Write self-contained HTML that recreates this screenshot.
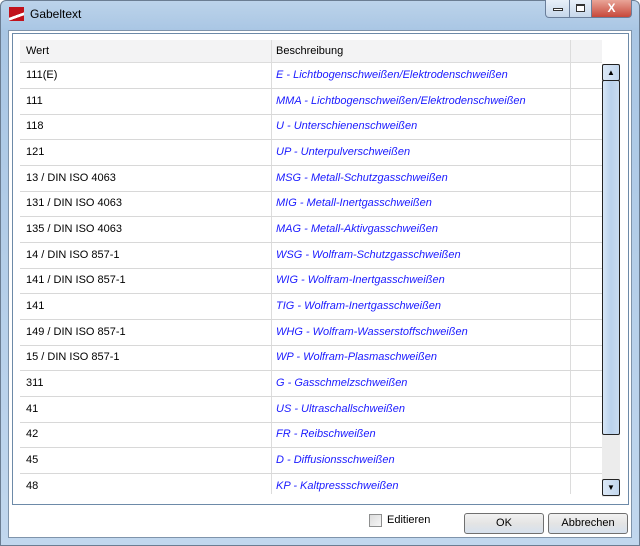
<!DOCTYPE html>
<html><head><meta charset="utf-8"><style>
*{box-sizing:border-box;margin:0;padding:0}
body{width:640px;height:546px;overflow:hidden;background:#fff;font-family:"Liberation Sans","DejaVu Sans",sans-serif;font-size:11px;position:relative}
.frame{position:absolute;left:0;top:0;width:640px;height:546px;background:linear-gradient(180deg,#bcd3ea 0,#a9c6e4 30px,#c1d7ee 100%);border:1px solid #6b7d92;border-radius:6px 6px 0 0}
.title{position:absolute;left:30px;top:7px;font-size:12px;color:#000}
.icon{position:absolute;left:9px;top:7px;width:15px;height:14px;background:linear-gradient(160deg,#c1121c 55%,#fff 56%,#fff 70%,#c1121c 71%)}
.tb{position:absolute;top:0;height:18px;border:1px solid #6a7e9a;border-top:none;background:linear-gradient(#e8f0f9,#c6d7ea)}
.content{position:absolute;left:8px;top:30px;width:624px;height:508px;background:#fff;border:1px solid #7f94ab}
.list{position:absolute;left:12px;top:33px;width:617px;height:472px;border:1px solid #6d8aa8;background:#fff}
.hdr{position:absolute;left:20px;top:40px;width:582px;height:23px;background:#f3f3f4;border-bottom:1px solid #dcdcdc}
.hdr span{position:absolute;top:5px;font-size:11px;color:#000}
.row{position:absolute;left:20px;width:582px;height:26px;border-bottom:1px solid #d8d8d8;font-size:11px}
.row .a{position:absolute;left:6px;top:6px;color:#000}
.row .b{position:absolute;left:256px;top:6px;color:#1a1aff;font-style:italic}
.vl{position:absolute;top:40px;width:1px;height:454px;background:#dcdcdc}
.sb{position:absolute;left:602px;top:64px;width:18px;height:433px;background:#ececec}
.sbb{position:absolute;left:602px;width:18px;height:17px;border:1px solid #222;border-radius:2px;background:linear-gradient(90deg,#dbe8f6,#c3d7ee);font-size:8px;text-align:center;line-height:15px}
.thumb{position:absolute;left:602px;top:80px;width:18px;height:355px;border:1px solid #222;border-radius:2px;background:linear-gradient(90deg,#d7e6f6,#b9d1ec 50%,#c8dbf0)}
.btn{position:absolute;top:513px;height:21px;border:1px solid #707070;border-radius:3px;background:linear-gradient(#f2f2f2,#e4e4e4 50%,#d6e1ee);text-align:center;line-height:19px;font-size:11px}
</style></head><body>
<div class="frame"></div>
<div class="icon"></div>
<div class="title">Gabeltext</div>
<div class="tb" style="left:545px;width:25px;border-radius:0 0 0 4px"><div style="position:absolute;left:7px;top:8px;width:10px;height:3px;border:1px solid #333;background:#fff"></div></div>
<div class="tb" style="left:569px;width:23px"><div style="position:absolute;left:6px;top:4px;width:9px;height:8px;border:1px solid #333;border-top-width:2px;background:#fff"></div></div>
<div class="tb" style="left:591px;width:41px;background:linear-gradient(#e9a598,#c7483a);border-radius:0 0 4px 0;color:#fff;text-align:center;font-weight:bold;font-size:12px;line-height:16px">X</div>
<div class="content"></div>
<div class="list"></div>
<div class="hdr"><span style="left:6px">Wert</span><span style="left:256px">Beschreibung</span></div>
<div class="vl" style="left:271px"></div>
<div class="vl" style="left:570px"></div>

<div class="row" style="top:63px"><span class="a">111(E)</span><span class="b">E - Lichtbogenschweißen/Elektrodenschweißen</span></div>
<div class="row" style="top:89px"><span class="a">111</span><span class="b">MMA - Lichtbogenschweißen/Elektrodenschweißen</span></div>
<div class="row" style="top:114px"><span class="a">118</span><span class="b">U - Unterschienenschweißen</span></div>
<div class="row" style="top:140px"><span class="a">121</span><span class="b">UP - Unterpulverschweißen</span></div>
<div class="row" style="top:166px"><span class="a">13 / DIN ISO 4063</span><span class="b">MSG - Metall-Schutzgasschweißen</span></div>
<div class="row" style="top:191px"><span class="a">131 / DIN ISO 4063</span><span class="b">MIG - Metall-Inertgasschweißen</span></div>
<div class="row" style="top:217px"><span class="a">135 / DIN ISO 4063</span><span class="b">MAG - Metall-Aktivgasschweißen</span></div>
<div class="row" style="top:243px"><span class="a">14 / DIN ISO 857-1</span><span class="b">WSG - Wolfram-Schutzgasschweißen</span></div>
<div class="row" style="top:268px"><span class="a">141 / DIN ISO 857-1</span><span class="b">WIG - Wolfram-Inertgasschweißen</span></div>
<div class="row" style="top:294px"><span class="a">141</span><span class="b">TIG - Wolfram-Inertgasschweißen</span></div>
<div class="row" style="top:320px"><span class="a">149 / DIN ISO 857-1</span><span class="b">WHG - Wolfram-Wasserstoffschweißen</span></div>
<div class="row" style="top:345px"><span class="a">15 / DIN ISO 857-1</span><span class="b">WP - Wolfram-Plasmaschweißen</span></div>
<div class="row" style="top:371px"><span class="a">311</span><span class="b">G - Gasschmelzschweißen</span></div>
<div class="row" style="top:397px"><span class="a">41</span><span class="b">US - Ultraschallschweißen</span></div>
<div class="row" style="top:422px"><span class="a">42</span><span class="b">FR - Reibschweißen</span></div>
<div class="row" style="top:448px"><span class="a">45</span><span class="b">D - Diffusionsschweißen</span></div>
<div class="row" style="top:474px;border-bottom:none"><span class="a">48</span><span class="b">KP - Kaltpressschweißen</span></div>

<div class="sb"></div>
<div class="sbb" style="top:64px">▲</div>
<div class="thumb"></div>
<div class="sbb" style="top:479px">▼</div>

<div style="position:absolute;left:369px;top:514px;width:13px;height:13px;border:1px solid #8e8f8f;background:linear-gradient(135deg,#dcdcdc,#f6f6f6)"></div>
<div style="position:absolute;left:387px;top:514px;font-size:11px">Editieren</div>
<div class="btn" style="left:464px;width:80px">OK</div>
<div class="btn" style="left:548px;width:80px">Abbrechen</div>
</body></html>
